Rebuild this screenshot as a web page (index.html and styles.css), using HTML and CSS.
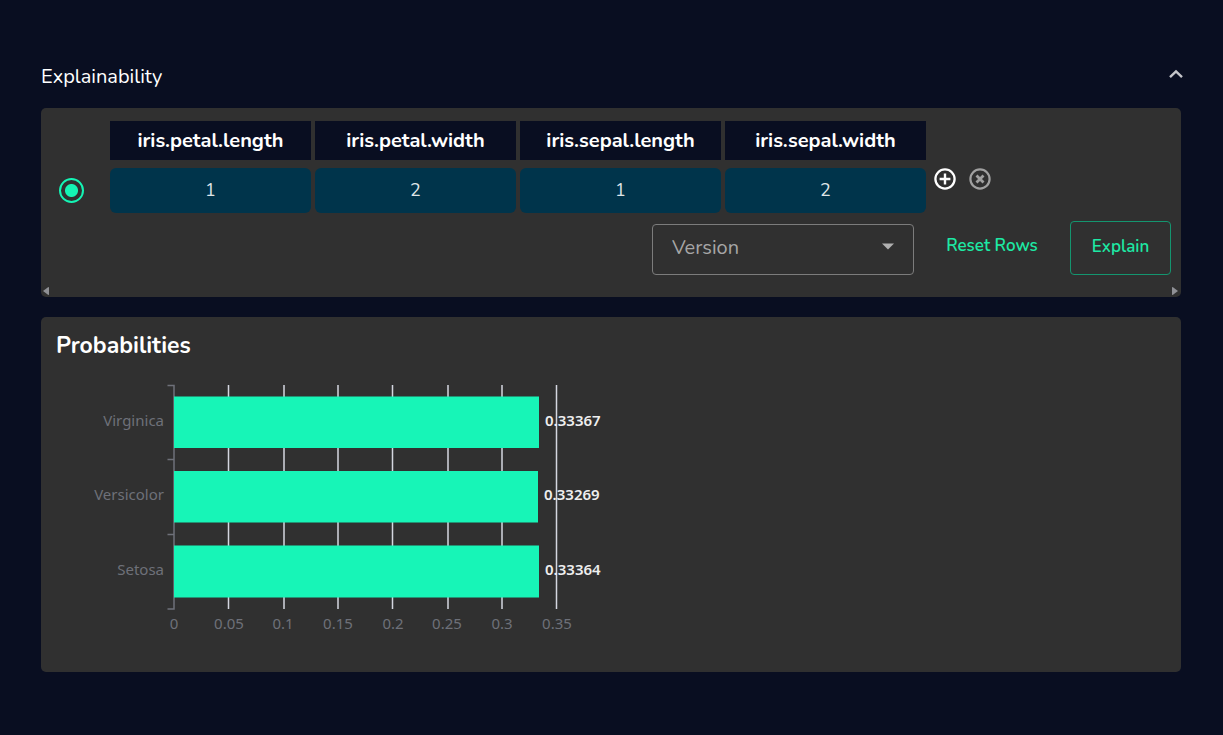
FILE: index.html
```
<!DOCTYPE html>
<html lang="en">
<head>
<meta charset="utf-8">
<meta name="viewport" content="width=device-width, initial-scale=1">
<title>Explainability</title>
<link rel="stylesheet" href="styles.css">
</head>
<body>
<main class="page">
  <header class="section-head">
    <h1 class="section-title">Explainability</h1>
    <button class="icon-button collapse" type="button" aria-label="Collapse section">
      <svg width="16" height="10" viewBox="0 0 16 10" fill="none" stroke="#c4c5ca" stroke-width="2.4"><path d="M2 8.2 8 2.4l6 5.8"/></svg>
    </button>
  </header>

  <section class="panel inputs-panel">
    <table class="inputs">
      <thead>
        <tr>
          <td class="pick"></td>
          <th id="pl" scope="col">iris.petal.length</th>
          <th id="pw" scope="col">iris.petal.width</th>
          <th id="sl" scope="col">iris.sepal.length</th>
          <th id="sw" scope="col">iris.sepal.width</th>
          <td></td>
        </tr>
      </thead>
      <tbody>
        <tr>
          <td class="pick"><input class="radio" type="radio" name="row" aria-label="Select row 1" checked></td>
          <td><input class="value" type="text" aria-labelledby="pl" value="1"></td>
          <td><input class="value" type="text" aria-labelledby="pw" value="2"></td>
          <td><input class="value" type="text" aria-labelledby="sl" value="1"></td>
          <td><input class="value" type="text" aria-labelledby="sw" value="2"></td>
          <td class="row-tools">
            <div class="tools">
              <button class="icon-button" type="button" aria-label="Add row">
                <svg width="22" height="22" viewBox="0 0 22 22" fill="none" stroke="#fff"><circle cx="11" cy="11" r="9.6" stroke-width="2.3"/><path stroke-width="2.4" d="M11 5.6v10.8M5.600 11h10.8"/></svg>
              </button>
              <button class="icon-button" type="button" aria-label="Remove row">
                <svg width="22" height="22" viewBox="0 0 22 22" fill="none" stroke="#a0a0a0"><circle cx="11" cy="11" r="9.6" stroke-width="2.2"/><path stroke-width="2.8" d="m7.5 7.500 7 7m0-7-7 7"/></svg>
              </button>
            </div>
          </td>
        </tr>
      </tbody>
    </table>

    <div class="actions">
      <div class="select-wrap">
        <select class="select" aria-label="Version"><option>Version</option></select>
        <svg class="caret" width="14" height="7" viewBox="0 0 14 7" fill="#b0b0b0"><path d="M1 .5h12L7 6.500z"/></svg>
      </div>
      <button class="reset" type="button">Reset Rows</button>
      <button class="explain" type="button">Explain</button>
    </div>

    <div class="scroll-hints">
      <svg width="7" height="8" viewBox="0 0 7 8" fill="#8f9095"><path d="M0 4 5 .2q1-.6 1 .6v6.400q0 1.200-1 .6z"/></svg>
      <svg width="7" height="8" viewBox="0 0 7 8" fill="#8f9095"><path d="M7 4 2 .2Q1-.4 1 .8v6.400q0 1.200 1 .6z"/></svg>
    </div>
  </section>

  <section class="panel chart-panel">
    <h2 class="chart-title">Probabilities</h2>
    <svg class="chart" width="580" height="270" viewBox="0 0 580 270" role="img" aria-label="Class probabilities">
      <path class="grid" d="M187.500 15v224M243 15v224M297 15v224M351.500 15v224M407 15v224M461 15v224M515.500 15v224"/>
      <path class="axis" d="M126.500 15.500h6.500v223.500h-6.500M126.500 89.500h6.500M126.500 164.500h6.500"/>
      <g class="bars">
        <rect x="133" y="26.500" width="365" height="51.500"/>
        <rect x="133" y="101" width="364" height="51.500"/>
        <rect x="133" y="175.500" width="365" height="52"/>
      </g>
      <g class="names">
        <text x="123" y="56">Virginica</text>
        <text x="123" y="130">Versicolor</text>
        <text x="123" y="205">Setosa</text>
      </g>
      <g class="ticks">
        <text x="133" y="259">0</text>
        <text x="188" y="259">0.05</text>
        <text x="242" y="259">0.1</text>
        <text x="297" y="259">0.15</text>
        <text x="352" y="259">0.2</text>
        <text x="406" y="259">0.25</text>
        <text x="461" y="259">0.3</text>
        <text x="516" y="259">0.35</text>
      </g>
      <g class="numbers">
        <text x="504" y="56">0.33367</text>
        <text x="503" y="130">0.33269</text>
        <text x="504" y="205">0.33364</text>
      </g>
    </svg>
  </section>
</main>
</body>
</html>
```
FILE: styles.css
```
* { box-sizing: border-box; }

body {
  margin: 0;
  background: #090e21;
  color: #fff;
  font-family: Nunito, "Noto Sans", sans-serif;
}

button, input, select { font-family: inherit; }

.page { padding: 60px 42px 60px 41px; }

.section-head {
  display: flex;
  align-items: flex-start;
  justify-content: space-between;
  height: 48px;
}

.section-title {
  margin: 0;
  font-size: 20px;
  line-height: 34px;
  font-weight: 400;
}

.icon-button {
  display: flex;
  padding: 0;
  border: 0;
  background: none;
  cursor: pointer;
}

.collapse { margin: 9px -3px 0 0; }

.panel {
  background: #303030;
  border-radius: 5px;
}

.inputs-panel { padding-top: 5px; overflow: hidden; }

.inputs {
  border-collapse: separate;
  border-spacing: 4px 8px;
}

.inputs td, .inputs th { padding: 0; }

.inputs th {
  width: 201px;
  min-width: 201px;
  height: 39px;
  background: #090e21;
  font-size: 20px;
  line-height: 24px;
  font-weight: 700;
}

.inputs .pick {
  width: 61px;
  min-width: 61px;
  padding-left: 14px;
}

.radio {
  appearance: none;
  display: block;
  width: 25px;
  height: 25px;
  margin: 0;
  border: 2px solid #14f4b4;
  border-radius: 50%;
  background: radial-gradient(circle, #14f4b4 6px, transparent 7px);
}

.value {
  display: block;
  width: 100%;
  height: 45px;
  padding: 0 0 2px;
  border: 0;
  border-radius: 6px;
  background: #00344b;
  color: #dfe4e7;
  font-size: 18px;
  text-align: center;
}

.inputs .row-tools { vertical-align: top; padding-left: 4px; }

.tools { display: flex; gap: 13px; }

.actions {
  display: flex;
  align-items: center;
  justify-content: flex-end;
  padding-right: 10px;
}

.select-wrap { position: relative; width: 262px; margin-top: 3px; }

.select {
  appearance: none;
  display: block;
  width: 100%;
  height: 51px;
  padding: 0 48px 4px 19px;
  border: 1px solid #7c7c7c;
  border-radius: 4px;
  background: transparent;
  color: #a6a6a6;
  font-size: 20px;
}

.caret {
  position: absolute;
  top: 19px;
  right: 19px;
  pointer-events: none;
}

.reset, .explain {
  background: none;
  color: #1de9a4;
  font-size: 17px;
  line-height: 24px;
  font-weight: 600;
  white-space: nowrap;
}

.reset { width: 156px; padding: 0 0 4px; border: 0; }

.explain {
  width: 101px;
  height: 54px;
  padding: 0 0 2px;
  border: 1px solid #14956f;
  border-radius: 4px;
}

.scroll-hints {
  display: flex;
  justify-content: space-between;
  padding: 12px 3px 2px 2px;
}

.chart-panel {
  margin-top: 20px;
  padding: 12px 0 32px;
}

.chart-title {
  margin: 0 15px 7px;
  font-size: 23px;
  line-height: 34px;
  font-weight: 700;
}

.chart { display: block; max-width: 100%; font-family: "Segoe UI", "Noto Sans", sans-serif; }

.grid { stroke: #d4d6e0; stroke-width: 1.5; fill: none; }
.bars { fill: #17f5b7; }
.axis { stroke: #6e7079; fill: none; stroke-width: 1.5; }

.names, .ticks { fill: #6e7079; font-size: 15px; }
.names { text-anchor: end; }
.ticks { text-anchor: middle; }
.numbers { fill: #eee; font-size: 15px; font-weight: 600; }
```
